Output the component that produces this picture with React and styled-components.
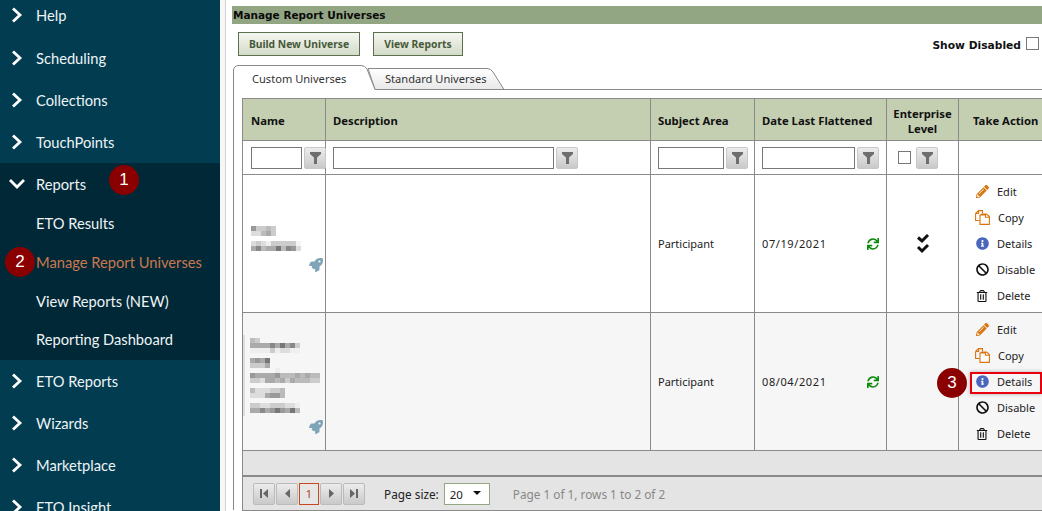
import React from 'react';
import styled, { createGlobalStyle } from 'styled-components';
import { FaPencilAlt, FaInfoCircle, FaBan, FaRegTrashAlt, FaSync, FaRocket } from 'react-icons/fa';

const Global = createGlobalStyle`
  html, body { margin: 0; padding: 0; background: #fff; overflow: hidden; }
  *, *::before, *::after { box-sizing: border-box; }
`;
const bodyFont = `"Noto Sans", "DejaVu Sans", sans-serif`;

const Page = styled.div`
  position: relative; width: 1042px; height: 511px; overflow: hidden;
  display: flex; font-family: ${bodyFont}; color: #111;
`;
const Sidebar = styled.nav`
  flex: 0 0 220px; height: 511px; background: #013c50; overflow: hidden;
  font-family: Lato, "Open Sans", sans-serif; font-size: 14.7px; color: #eef4f6;
`;
const Item = styled.div`
  height: ${p => p.$h || 42}px; margin-top: ${p => p.$mt || 0}px; display: flex; align-items: center;
  padding-left: ${p => p.$sub ? 36 : 0}px; padding-bottom: ${p => p.$pb || 0}px; color: ${p => p.$active ? '#c9784f' : 'inherit'};
`;
const Arrow = styled.span` flex: 0 0 36px; display: flex; padding-left: ${p => p.$down ? 8 : 11}px; `;
const Group = styled.div` background: #012836; `;
const Divider = styled.div` flex: 0 0 6px; background: #fff; border-right: 1px solid #d2d2d2; box-shadow: inset 5px 0 0 #f6f6f6; `;
const Main = styled.main` flex: 1; min-width: 0; padding: 6px 0 0 6px; `;
const TitleBar = styled.h1`
  margin: 0; height: 18px; background: #93a684; font: bold 10.5px/19px "DejaVu Sans", sans-serif; padding-left: 1px; color: #0a0a0a;
`;
const Toolbar = styled.div` margin-top: 8px; height: 24px; display: flex; align-items: center; padding-left: 6px; gap: 13px; `;
const Btn = styled.button`
  height: 24px; padding: 0; width: ${p => p.$w}px; border: 1px solid #5c7050;
  background: linear-gradient(#f4f6f0, #d4dbc8); color: #465a3a; font: bold 10.3px ${bodyFont};
`;
const ShowDisabled = styled.label`
  margin-left: auto; margin-top: 2px; display: flex; align-items: center; gap: 5px; padding-right: 3px; font: bold 10.7px "DejaVu Sans", sans-serif;
`;
const Check = styled.span`
  display: inline-block; flex: 0 0 auto; width: 13px; height: 13px; margin-top: ${p => p.$mt || 0}px; margin-right: ${p => p.$mr || 0}px;
  border: 1px solid #777; background: #fff;
`;
const Tabs = styled.div` position: relative; margin-top: 9px; height: 25px; margin-left: 1px; `;
const TabShape = styled.svg` position: absolute; left: 0; top: 0; `;
const Tab = styled.span`
  position: absolute; top: ${p => p.$top}px; left: ${p => p.$left}px; font-size: 11.1px; line-height: 16px; color: #333;
`;
const Panel = styled.div` margin-left: 1px; border-left: 1px solid #888; padding: 8px 0 0 8px; height: 420px; `;
const Table = styled.table`
  border-collapse: collapse; table-layout: fixed; width: 806px; font-size: 11px;
  td, th { border: 1px solid #8a8a8a; padding: 0; }
`;
const HeadCell = styled.th`
  height: 42px; background: #c4cfb2; font-size: 11.3px; font-weight: bold; color: #111;
  text-align: ${p => p.$center ? 'center' : 'left'}; padding: 2px 0 0 ${p => p.$pl ?? 7}px !important; line-height: 15px;
`;
const FilterCell = styled.td` height: 34px; overflow: visible; `;
const FilterRow = styled.div` display: flex; align-items: center; gap: 2px; padding-left: ${p => p.$pl || 7}px; `;
const Field = styled.span` flex: 0 0 ${p => p.$w}px; height: 22px; border: 1px solid #777; background: #fff; `;
const FilterBtn = styled.span`
  flex: 0 0 22px; height: 22px; border: 1px solid #c8c8c8; border-radius: 2px;
  background: linear-gradient(#ececec, #c9c9c9); display: flex; align-items: center; justify-content: center;
`;
const DataRow = styled.tr` background: ${p => p.$alt ? '#f6f6f6' : '#fff'}; `;
const DataCell = styled.td` height: 138px; padding-left: ${p => p.$pl ?? 7}px !important; color: #222; `;
const NameCell = styled.td` height: 138px; vertical-align: top; padding-top: ${p => p.$pt}px !important; `;
const RocketLine = styled.div` display: flex; justify-content: flex-end; padding-right: 2px; margin-top: ${p => p.$mt}px; color: #7fa4b8; line-height: 0; `;
const DateLine = styled.div` display: flex; align-items: center; justify-content: space-between; padding-right: 7px; color: #0a8a0a; `;
const DateText = styled.span` color: #222; letter-spacing: .6px; `;
const Stack = styled.div` display: flex; justify-content: center; line-height: 0; `;
const Actions = styled.div` display: flex; flex-direction: column; `;
const ActionItem = styled.div`
  position: relative; height: 26px; display: flex; align-items: center; padding-left: 16px; color: #222; font-size: 11px;
  ${p => p.$hl && `&::after { content: ''; position: absolute; left: 11px; top: 3px; width: 72px; height: 22px; border: 2px solid #e8000c; box-shadow: 0 0 4px rgba(0,0,0,.3); }`}
`;
const ActionIcon = styled.span` flex: 0 0 14px; display: flex; justify-content: center; margin-right: 8px; color: ${p => p.$c}; `;
const FooterGap = styled.div` height: 24px; width: 806px; background: #e4e4e4; border-left: 1px solid #8a8a8a; `;
const Pager = styled.div`
  width: 806px; height: 36px; background: #e4e4e4; border: 1px solid #8a8a8a; border-top-width: 2px; border-right: 0;
  display: flex; align-items: center; padding-left: 10px; font-size: 11.8px; color: #222;
`;
const PageBtn = styled.span`
  width: ${p => p.$cur ? 20 : 22}px; height: 22px; margin-right: 1px; border: 1px solid ${p => p.$cur ? '#c8491c' : '#bbb'}; border-radius: ${p => p.$cur ? 0 : 2}px;
  background: ${p => p.$cur ? '#e6e6e6' : 'linear-gradient(#ececec, #c9c9c9)'}; color: #b5401a;
  display: flex; align-items: center; justify-content: center; font-size: 11px;
`;
const PageLabel = styled.span` margin: 0 5px 0 18px; `;
const Select = styled.span`
  width: 46px; height: 22px; border: 1px solid #93a684; background: #fff; display: flex; align-items: center; justify-content: space-between;
  padding: 2px 8px 0 5px; font-size: 11.5px;
`;
const Caret = styled.span` width: 0; height: 0; border: 4px solid transparent; border-top-color: #111; border-bottom: 0; margin-top: -3px; `;
const PageInfo = styled.span` margin-left: 23px; color: #888; `;
const Badge = styled.span`
  position: absolute; left: ${p => p.$x - 15}px; top: ${p => p.$y - 15}px; width: 30px; height: 30px; border-radius: 50%;
  background: #8a0000; color: #fff; display: flex; align-items: center; justify-content: center;
  font: 17px "Liberation Sans", sans-serif;
`;

const Chevron = ({ down }) => down
  ? <svg width="18" height="14" viewBox="0 0 18 14"><path d="M2 3l7 7 7-7" fill="none" stroke="#fff" strokeWidth="2.8" /></svg>
  : <svg width="12" height="16" viewBox="0 0 12 16"><path d="M2 1.5L9 8l-7 6.5" fill="none" stroke="#fff" strokeWidth="2.8" /></svg>;

const Funnel = () => <svg width="11" height="12" viewBox="0 0 11 12"><path d="M0 0h11v2L7 5.5V12H4V5.5L0 2z" fill="#6e6e6e" /></svg>;

const DoubleCheck = () => (
  <svg width="14" height="20" viewBox="0 0 14 20" fill="none" stroke="#111" strokeWidth="3">
    <path d="M2 3.5L6 7l6-6" />
    <path d="M2 13l4 4 6-6" />
  </svg>
);

const CopyIcon = () => (
  <svg width="15" height="15" viewBox="0 0 15 15" fill="none" stroke="#d9740f" strokeWidth="1.1">
    <path d="M.6 3.5L3.5.6h4v3M.6 3.5v7h4M.6 3.5h3V.6" />
    <path d="M5 5h5.5v-.5M5 5v9.4h9.4V6.6L11.5 4H7L5 5zM10.5 4.3v3h3.6" fill="#fff" />
  </svg>
);

const PagerIcon = ({ d }) => <svg width="10" height="11" viewBox="0 0 10 11"><path d={d} fill="#666" /></svg>;

const Blur = ({ w, h, cells, strip }) => (
  <svg width={w} height={h} viewBox={`0 0 ${w} ${h}`} style={{ display: 'block' }}>
    {strip && <rect x="0" y="0" width="2" height={h} fill="#ddd" />}
    {cells.map(([y, x0, colors], i) => colors.split(' ').map((c, j) => (
      <rect key={`${i}-${j}`} x={x0 + j * 5} y={y} width="5" height="5" fill={`#${c}`} />
    )))}
  </svg>
);
const blur1 = [
  [0, 8, '999 ccc ccc bbb ccc'],
  [5, 8, 'ddd ddd bbb aaa ccc'],
  [15, 8, 'ddd ccc ddd eee ccc ccc ccc ccc ccc f4f4f4'],
  [20, 8, 'aaa 888 bbb aaa aaa 777 bbb 888 999 ddd'],
];
const blur2 = [
  [3, 7, 'bbb ccc'],
  [8, 7, 'aaa aaa aaa aaa 888 aaa 777 aaa 888 ccc'],
  [13, 7, 'eee eee eee eee ccc eee ddd ddd eee f0f0f0'],
  [23, 7, 'aaa 999 aaa 777'],
  [28, 7, 'ccc ccc ccc aaa'],
  [33, 32, 'eee'],
  [38, 7, '999 aaa aaa aaa aaa 999 bbb bbb bbb aaa bbb aaa bbb bbb'],
  [43, 7, 'ccc ccc ddd aaa aaa bbb aaa ccc aaa bbb bbb bbb ccc ccc'],
  [53, 7, 'bbb ddd ddd ddd ccc ccc bbb'],
  [58, 7, 'ddd ddd ddd aaa 999 999 bbb'],
  [68, 7, 'ccc ccc ddd ddd ccc ccc ccc ddd ddd eee'],
  [73, 7, 'aaa aaa 888 aaa 999 777 999 aaa 777 bbb'],
];

const actions = [
  ['Edit', <FaPencilAlt size={13} />, '#d9740f'],
  ['Copy', <CopyIcon />, '#d9740f'],
  ['Details', <FaInfoCircle size={13} />, '#4a67bd'],
  ['Disable', <FaBan size={13} />, '#111'],
  ['Delete', <FaRegTrashAlt size={12} />, '#111'],
];

const ActionList = ({ hl }) => (
  <Actions>
    {actions.map(([label, icon, c]) => (
      <ActionItem key={label} $hl={hl && label === 'Details'}>
        <ActionIcon $c={c}>{icon}</ActionIcon>{label}
      </ActionItem>
    ))}
  </Actions>
);

const Nav = ({ label }) => <Item><Arrow><Chevron /></Arrow>{label}</Item>;

export default function App() {
  return (
    <Page>
      <Global />
      <Sidebar>
        <Item $mt={-7} $h={44}><Arrow><Chevron /></Arrow>Help</Item>
        <Nav label="Scheduling" />
        <Nav label="Collections" />
        <Nav label="TouchPoints" />
        <Group>
          <Item><Arrow $down><Chevron down /></Arrow>Reports</Item>
          <Item $sub $h={37} $pb={2}>ETO Results</Item>
          <Item $sub $h={39} $active>Manage Report Universes</Item>
          <Item $sub $h={39}>View Reports (NEW)</Item>
          <Item $sub $h={40} $pb={2}>Reporting Dashboard</Item>
        </Group>
        <Nav label="ETO Reports" />
        <Nav label="Wizards" />
        <Nav label="Marketplace" />
        <Nav label="ETO Insight" />
      </Sidebar>
      <Divider />
      <Main>
        <TitleBar>Manage Report Universes</TitleBar>
        <Toolbar>
          <Btn $w={122}>Build New Universe</Btn>
          <Btn $w={90}>View Reports</Btn>
          <ShowDisabled>Show Disabled <Check $mt={-4} /></ShowDisabled>
        </Toolbar>
        <Tabs>
          <TabShape width="809" height="25" viewBox="0 0 809 25">
            <defs>
              <linearGradient id="tg" x1="0" y1="0" x2="0" y2="1"><stop offset="0" stopColor="#fff" /><stop offset="1" stopColor="#e8e8e8" /></linearGradient>
            </defs>
            <path d="M135 3.5H254Q258 3.5 260 7L271 24.5H142Z" fill="url(#tg)" stroke="#888" />
            <path d="M271 24.5H809" fill="none" stroke="#888" />
            <path d="M.5 25V6Q.5 .5 6 .5H128Q132 .5 134 4L142 24.5" fill="#fff" stroke="#888" />
          </TabShape>
          <Tab $left={19} $top={6}>Custom Universes</Tab>
          <Tab $left={152} $top={6}>Standard Universes</Tab>
        </Tabs>
        <Panel>
          <Table>
            <colgroup>
              <col width="83" /><col width="325" /><col width="104" /><col width="132" /><col width="72" /><col width="90" />
            </colgroup>
            <thead>
              <tr>
                <HeadCell $pl={8}>Name</HeadCell>
                <HeadCell>Description</HeadCell>
                <HeadCell>Subject Area</HeadCell>
                <HeadCell>Date Last Flattened</HeadCell>
                <HeadCell $center $pl={0}>Enterprise Level</HeadCell>
                <HeadCell $pl={14}>Take Action</HeadCell>
              </tr>
              <tr>
                <FilterCell><FilterRow $pl={8}><Field $w={51} /><FilterBtn><Funnel /></FilterBtn></FilterRow></FilterCell>
                <FilterCell><FilterRow><Field $w={221} /><FilterBtn><Funnel /></FilterBtn></FilterRow></FilterCell>
                <FilterCell><FilterRow><Field $w={66} /><FilterBtn><Funnel /></FilterBtn></FilterRow></FilterCell>
                <FilterCell><FilterRow><Field $w={93} /><FilterBtn><Funnel /></FilterBtn></FilterRow></FilterCell>
                <FilterCell><FilterRow $pl={11}><Check $mr={3} /><FilterBtn><Funnel /></FilterBtn></FilterRow></FilterCell>
                <FilterCell />
              </tr>
            </thead>
            <tbody>
              <DataRow>
                <NameCell $pt={51}>
                  <Blur w={80} h={25} cells={blur1} />
                  <RocketLine $mt={7}><FaRocket size={14} /></RocketLine>
                </NameCell>
                <DataCell />
                <DataCell>Participant</DataCell>
                <DataCell><DateLine><DateText>07/19/2021</DateText><FaSync size={12} /></DateLine></DataCell>
                <DataCell $pl={0}><Stack><DoubleCheck /></Stack></DataCell>
                <DataCell $pl={0}><ActionList /></DataCell>
              </DataRow>
              <DataRow $alt>
                <NameCell $pt={22}>
                  <Blur w={80} h={81} cells={blur2} strip />
                  <RocketLine $mt={4}><FaRocket size={14} /></RocketLine>
                </NameCell>
                <DataCell />
                <DataCell>Participant</DataCell>
                <DataCell><DateLine><DateText>08/04/2021</DateText><FaSync size={12} /></DateLine></DataCell>
                <DataCell />
                <DataCell $pl={0}><ActionList hl /></DataCell>
              </DataRow>
            </tbody>
          </Table>
          <FooterGap />
          <Pager>
            <PageBtn><PagerIcon d="M1 1h2v9H1zM9 1v9L4 5.5z" /></PageBtn>
            <PageBtn><PagerIcon d="M8 1v9L3 5.5z" /></PageBtn>
            <PageBtn $cur>1</PageBtn>
            <PageBtn><PagerIcon d="M3 1v9l5-4.5z" /></PageBtn>
            <PageBtn><PagerIcon d="M1 1v9l5-4.5zM7 1h2v9H7z" /></PageBtn>
            <PageLabel>Page size:</PageLabel>
            <Select>20<Caret /></Select>
            <PageInfo>Page 1 of 1, rows 1 to 2 of 2</PageInfo>
          </Pager>
        </Panel>
      </Main>
      <Badge $x={124} $y={180}>1</Badge>
      <Badge $x={20} $y={262}>2</Badge>
      <Badge $x={952} $y={383}>3</Badge>
    </Page>
  );
}
